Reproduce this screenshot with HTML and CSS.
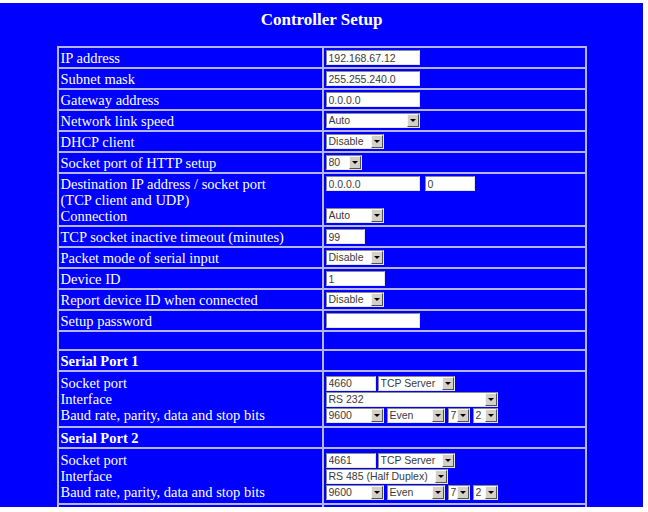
FILE: index.html
```html
<!DOCTYPE html>
<html lang="en">
<head>
    <meta charset="UTF-8">
    <title>Controller Setup</title>
    <link rel="stylesheet" href="styles.css">
</head>
<body>
    <div class="page">
        <h1 class="page-title">Controller Setup</h1>

        <table class="setup">
            <tr>
                <td class="label">IP address</td>
                <td><div class="ctl-row"><input type="text" class="text w94" value="192.168.67.12"></div></td>
            </tr>
            <tr>
                <td class="label">Subnet mask</td>
                <td><div class="ctl-row"><input type="text" class="text w94" value="255.255.240.0"></div></td>
            </tr>
            <tr>
                <td class="label">Gateway address</td>
                <td><div class="ctl-row"><input type="text" class="text w94" value="0.0.0.0"></div></td>
            </tr>
            <tr>
                <td class="label">Network link speed</td>
                <td><div class="ctl-row"><span class="select w94"><span class="value">Auto</span><span class="arrow"></span></span></div></td>
            </tr>
            <tr>
                <td class="label">DHCP client</td>
                <td><div class="ctl-row"><span class="select w58"><span class="value">Disable</span><span class="arrow"></span></span></div></td>
            </tr>
            <tr>
                <td class="label">Socket port of HTTP setup</td>
                <td><div class="ctl-row"><span class="select w36"><span class="value">80</span><span class="arrow"></span></span></div></td>
            </tr>
            <tr>
                <td class="label">Destination IP address / socket port<br>(TCP client and UDP)<br>Connection</td>
                <td>
                    <div class="ctl-row gap5">
                        <input type="text" class="text w94" value="0.0.0.0">
                        <input type="text" class="text w50" value="0">
                    </div>
                    <div class="ctl-row"></div>
                    <div class="ctl-row"><span class="select w58"><span class="value">Auto</span><span class="arrow"></span></span></div>
                </td>
            </tr>
            <tr>
                <td class="label">TCP socket inactive timeout (minutes)</td>
                <td><div class="ctl-row"><input type="text" class="text w39" value="99"></div></td>
            </tr>
            <tr>
                <td class="label">Packet mode of serial input</td>
                <td><div class="ctl-row"><span class="select w58"><span class="value">Disable</span><span class="arrow"></span></span></div></td>
            </tr>
            <tr>
                <td class="label">Device ID</td>
                <td><div class="ctl-row"><input type="text" class="text w59" value="1"></div></td>
            </tr>
            <tr>
                <td class="label">Report device ID when connected</td>
                <td><div class="ctl-row"><span class="select w58"><span class="value">Disable</span><span class="arrow"></span></span></div></td>
            </tr>
            <tr>
                <td class="label">Setup password</td>
                <td><div class="ctl-row"><input type="password" class="text w94" value=""></div></td>
            </tr>
            <tr class="blank">
                <td class="label"></td>
                <td></td>
            </tr>

            <!-- serial port 1 -->
            <tr>
                <td class="label section">Serial Port 1</td>
                <td></td>
            </tr>
            <tr class="port">
                <td class="label">Socket port<br>Interface<br>Baud rate, parity, data and stop bits</td>
                <td>
                    <div class="ctl-row gap2">
                        <input type="text" class="text w50" value="4660">
                        <span class="select w77"><span class="value">TCP Server</span><span class="arrow"></span></span>
                    </div>
                    <div class="ctl-row"><span class="select w172"><span class="value">RS 232</span><span class="arrow"></span></span></div>
                    <div class="ctl-row gap3">
                        <span class="select w58"><span class="value">9600</span><span class="arrow"></span></span>
                        <span class="select w58"><span class="value">Even</span><span class="arrow"></span></span>
                        <span class="select w22"><span class="value">7</span><span class="arrow"></span></span>
                        <span class="select w25"><span class="value">2</span><span class="arrow"></span></span>
                    </div>
                </td>
            </tr>

            <!-- serial port 2 -->
            <tr>
                <td class="label section">Serial Port 2</td>
                <td></td>
            </tr>
            <tr class="port">
                <td class="label">Socket port<br>Interface<br>Baud rate, parity, data and stop bits</td>
                <td>
                    <div class="ctl-row gap2">
                        <input type="text" class="text w50" value="4661">
                        <span class="select w77"><span class="value">TCP Server</span><span class="arrow"></span></span>
                    </div>
                    <div class="ctl-row"><span class="select w122"><span class="value">RS 485 (Half Duplex)</span><span class="arrow"></span></span></div>
                    <div class="ctl-row gap3">
                        <span class="select w58"><span class="value">9600</span><span class="arrow"></span></span>
                        <span class="select w58"><span class="value">Even</span><span class="arrow"></span></span>
                        <span class="select w22"><span class="value">7</span><span class="arrow"></span></span>
                        <span class="select w25"><span class="value">2</span><span class="arrow"></span></span>
                    </div>
                </td>
            </tr>

            <!-- next section starts below the fold -->
            <tr class="blank">
                <td class="label"></td>
                <td></td>
            </tr>
        </table>
    </div>
</body>
</html>
```

FILE: styles.css
```css
* {
    box-sizing: border-box;
    margin: 0;
    padding: 0;
}

body {
    background-color: #fff;
    padding: 3px 5px 0 0;
    font-family: "Liberation Serif", "Times New Roman", serif;
}

.page {
    background-color: #0000ff;
    color: #fff;
    height: 504px;
    overflow: hidden;
    padding-top: 8px;
}

.page-title {
    font-size: 17px;
    font-weight: bold;
    line-height: 18px;
    text-align: center;
    margin-bottom: 17px;
}

/* settings table */
.setup {
    width: 530px;
    margin: 0 auto;
    border: 1px solid #b4b4ff;
    border-collapse: separate;
    border-spacing: 0;
    font-size: 14.5px;
    line-height: 16px;
}

.setup td {
    border: 1px solid #b4b4ff;
    padding: 1.5px 2px;
    vertical-align: top;
}

.setup td.label {
    width: 265px;
    white-space: nowrap;
}

.setup td.section {
    font-weight: bold;
}

.setup .blank td {
    height: 19px;
}

.setup .port td {
    padding: 3px 2px;
}

/* form controls */
.ctl-row {
    display: flex;
    align-items: center;
    height: 16px;
}

.gap2 { gap: 2px; }
.gap3 { gap: 3px; }
.gap5 { gap: 5px; }

.text,
.select {
    height: 15px;
    background-color: #fff;
    border: 1px solid;
    border-color: #8a8a8a #e4e4e4 #e4e4e4 #8a8a8a;
    font-family: "Liberation Sans", Arial, sans-serif;
    font-size: 10.5px;
    color: #3a3a3a;
}

.text {
    padding: 0 2px;
    outline: none;
}

.select {
    display: flex;
    align-items: center;
    padding-left: 2px;
}

.select .value {
    flex: 1;
    white-space: nowrap;
    overflow: hidden;
    line-height: 13px;
}

.select .arrow {
    width: 12px;
    height: 13px;
    background-color: #d4d0c8;
    border: 1px solid;
    border-color: #f6f6f6 #505050 #505050 #f6f6f6;
    display: flex;
    align-items: center;
    justify-content: center;
    flex-shrink: 0;
}

.select .arrow::after {
    content: "";
    border-left: 3px solid transparent;
    border-right: 3px solid transparent;
    border-top: 3px solid #000;
}

.w22 { width: 22px; }
.w25 { width: 25px; }
.w36 { width: 36px; }
.w39 { width: 39px; }
.w50 { width: 50px; }
.w58 { width: 58px; }
.w59 { width: 59px; }
.w77 { width: 77px; }
.w94 { width: 94px; }
.w122 { width: 122px; }
.w172 { width: 172px; }
```
